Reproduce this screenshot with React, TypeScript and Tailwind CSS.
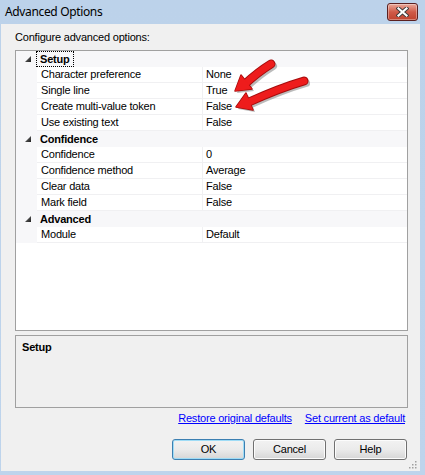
import React from 'react';

type Prop = { name: string; value: string };
type Category = { title: string; props: Prop[]; focused?: boolean };

const categories: Category[] = [
  {
    title: 'Setup',
    focused: true,
    props: [
      { name: 'Character preference', value: 'None' },
      { name: 'Single line', value: 'True' },
      { name: 'Create multi-value token', value: 'False' },
      { name: 'Use existing text', value: 'False' },
    ],
  },
  {
    title: 'Confidence',
    props: [
      { name: 'Confidence', value: '0' },
      { name: 'Confidence method', value: 'Average' },
      { name: 'Clear data', value: 'False' },
      { name: 'Mark field', value: 'False' },
    ],
  },
  {
    title: 'Advanced',
    props: [{ name: 'Module', value: 'Default' }],
  },
];

const ui = { fontFamily: '"Liberation Sans", Arial, sans-serif', letterSpacing: '-0.2px' };

function Expander() {
  return (
    <svg width="6" height="6" viewBox="0 0 6 6" className="block">
      <defs>
        <linearGradient id="exp" x1="0" y1="0" x2="1" y2="1">
          <stop offset="0" stopColor="#7a7a7a" />
          <stop offset="1" stopColor="#1e1e1e" />
        </linearGradient>
      </defs>
      <polygon points="6,0 6,6 0,6" fill="url(#exp)" />
    </svg>
  );
}

function CloseButton() {
  return (
    <div className="flex h-[18px] w-[31px] items-center justify-center rounded-[3px] border border-[#5b2020] bg-gradient-to-b from-[#e9a99b] via-[#cf5a48] to-[#c0432f] shadow-[inset_0_0_0_1px_rgba(255,255,255,0.35)]">
      <svg width="13" height="10" viewBox="0 0 13 10">
        <path d="M2.5 1.5 L10.5 8.5 M10.5 1.5 L2.5 8.5" stroke="#3a3a3a" strokeWidth="4" strokeLinecap="square" />
        <path d="M2.5 1.5 L10.5 8.5 M10.5 1.5 L2.5 8.5" stroke="#ffffff" strokeWidth="2.2" strokeLinecap="square" />
      </svg>
    </div>
  );
}

function Arrows() {
  const arrow = (d: string, head: string, key: string) => (
    <g key={key}>
      <g transform="translate(2 2)" opacity="0.35">
        <path d={d} stroke="#404040" strokeWidth="8" strokeLinecap="round" fill="none" />
        <polygon points={head} fill="#404040" />
      </g>
      <path d={d} stroke="#a50c0c" strokeWidth="9" strokeLinecap="round" fill="none" />
      <polygon points={head} fill="#a50c0c" stroke="#a50c0c" strokeWidth="1.5" strokeLinejoin="round" />
      <path d={d} stroke="#ee1c1c" strokeWidth="7" strokeLinecap="round" fill="none" />
      <polygon points={head} fill="#ee1c1c" />
    </g>
  );
  return (
    <svg className="pointer-events-none absolute left-0 top-0" width="425" height="475">
      {arrow('M271 64 Q258 72 245 84', '235,91 252,89 241,75', 'a1')}
      {arrow('M304 81 Q280 88 249 102', '236,107 253,110 246,93', 'a2')}
    </svg>
  );
}

function PropertyGrid() {
  return (
    <div className="flex h-[281px] flex-col overflow-hidden border border-[#a0a0a0] bg-white text-[11px] leading-[13px] text-black" style={ui}>
      {categories.map(cat => (
        <div key={cat.title}>
          <div className="flex h-[16px] items-center bg-[#f7f7f9]">
            <div className="flex w-[21px] shrink-0 justify-end pr-[6px]">
              <Expander />
            </div>
            <div className="flex h-full items-center">
              <span
                className={
                  'flex h-[14px] items-center px-[3px] font-bold ' +
                  (cat.focused ? 'outline outline-1 outline-dotted outline-black' : '')
                }
              >
                {cat.title}
              </span>
            </div>
          </div>
          {cat.props.map(p => (
            <div key={p.name} className="flex h-[16px]">
              <div className="w-[21px] shrink-0 bg-[#f7f7f9]" />
              <div className="flex w-[166px] shrink-0 items-center border-b border-r border-[#f0f0f2] pl-[4px]">
                {p.name}
              </div>
              <div className="flex flex-1 items-center border-b border-[#f0f0f2] pl-[3px]">{p.value}</div>
            </div>
          ))}
        </div>
      ))}
    </div>
  );
}

function Button({ label, focused }: { label: string; focused?: boolean }) {
  return (
    <button
      className={
        'h-[21px] w-[73px] rounded-[3px] border bg-gradient-to-b from-[#f2f2f2] via-[#ebebeb] to-[#d6d6d6] text-[11px] text-black ' +
        (focused
          ? 'border-[#3c7fb1] shadow-[inset_0_0_0_1px_#9fdcf6]'
          : 'border-[#707070] shadow-[inset_0_0_0_1px_#fcfcfc]')
      }
      style={ui}
    >
      {label}
    </button>
  );
}

export default function App() {
  return (
    <div className="relative flex h-[475px] w-[425px] flex-col overflow-hidden bg-gradient-to-b from-[#bcd2ea] to-[#bed4ec]">
      <div className="flex h-[24px] shrink-0 items-center justify-between pl-[5px] pr-[7px]">
        <span
          className="text-[12px] text-black"
          style={{ fontFamily: '"Noto Sans", "Open Sans", sans-serif', letterSpacing: '-0.35px' }}
        >
          Advanced Options
        </span>
        <CloseButton />
      </div>
      <div className="ml-[1px] mr-[5px] mb-[5px] flex flex-1 flex-col bg-[#f0f0f0] pl-[14px] pr-[12px]">
        <div className="pt-[7px] text-[11px] leading-[13px] text-black" style={ui}>
          Configure advanced options:
        </div>
        <div className="mt-[6px]">
          <PropertyGrid />
        </div>
        <div className="mt-[4px] h-[73px] border border-[#a0a0a0] bg-[#f0f0f0] px-[6px] pt-[5px]">
          <div className="text-[11px] font-bold leading-[13px] text-black" style={ui}>
            Setup
          </div>
        </div>
        <div className="mt-[4px] flex justify-end gap-[13px] pr-[3px] text-[11px] leading-[13px] text-[#0000ff]" style={ui}>
          <a className="cursor-pointer underline">Restore original defaults</a>
          <a className="cursor-pointer underline">Set current as default</a>
        </div>
        <div className="mt-[14px] flex justify-end gap-[8px] pr-[1px]">
          <Button label="OK" focused />
          <Button label="Cancel" />
          <Button label="Help" />
        </div>
        <div className="flex flex-1 items-end justify-end pb-[2px]">
          <svg width="9" height="9" viewBox="0 0 9 9" className="-mr-[9px]">
            {[
              [7, 1],
              [7, 4],
              [4, 4],
              [7, 7],
              [4, 7],
              [1, 7],
            ].map(([x, y]) => (
              <rect key={`${x}-${y}`} x={x} y={y} width="1.5" height="1.5" fill="#a0a0a0" />
            ))}
          </svg>
        </div>
      </div>
      <Arrows />
    </div>
  );
}
